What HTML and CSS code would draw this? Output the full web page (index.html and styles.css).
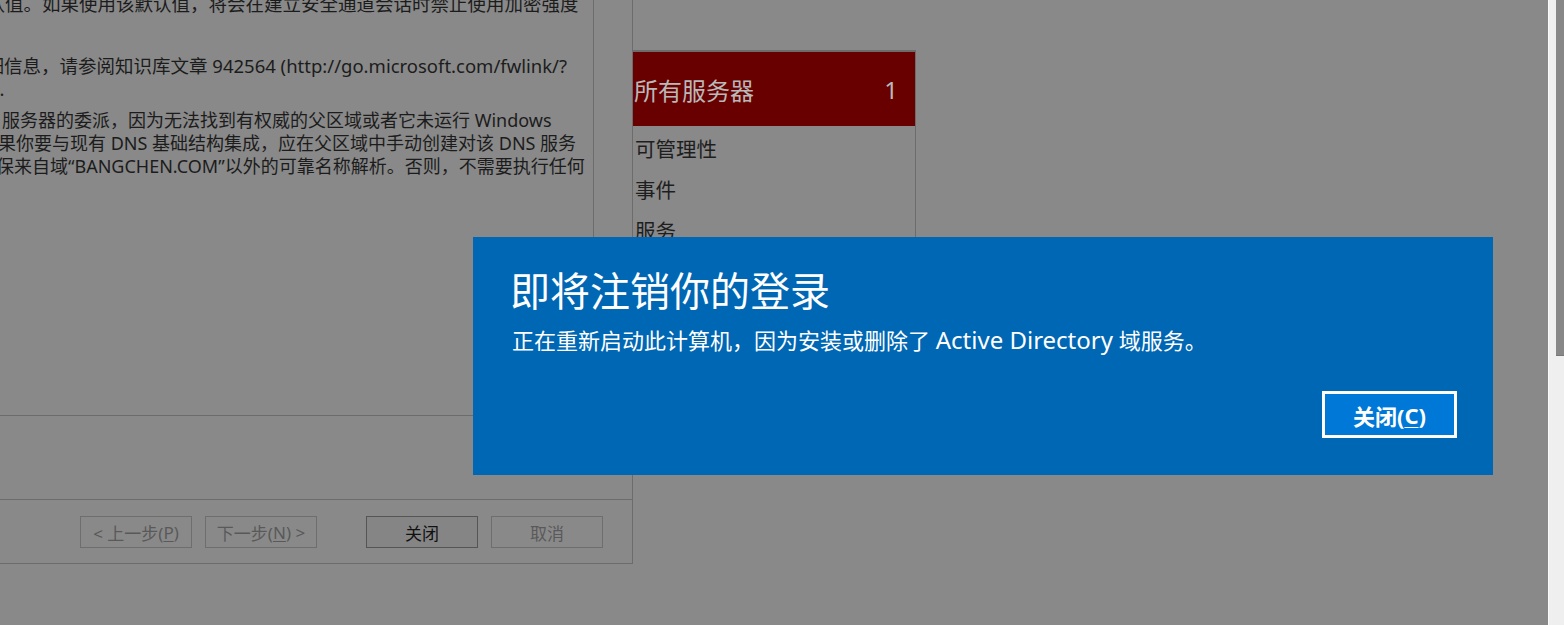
FILE: index.html
```html
<!DOCTYPE html>
<html lang="zh-CN">
<head>
<meta charset="utf-8">
<title>即将注销你的登录</title>
<link rel="stylesheet" href="styles.css">
</head>
<body>
<div class="desktop">
  <div class="wizard">
    <div class="wiz-body">
      <div class="text-pane">
        <p class="line l1">默认值。如果使用该默认值，将会在建立安全通道会话时禁止使用加密强度</p>
        <p class="line l2">详细信息，请参阅知识库文章 942564 (http://go.microsoft.com/fwlink/?</p>
        <p class="line l3">).</p>
        <p class="line l4">服务器的委派，因为无法找到有权威的父区域或者它未运行 Windows</p>
        <p class="line l5">如果你要与现有 DNS 基础结构集成，应在父区域中手动创建对该 DNS 服务</p>
        <p class="line l6">确保来自域“BANGCHEN.COM”以外的可靠名称解析。否则，不需要执行任何</p>
      </div>
      <div class="pane-gap"></div>
    </div>
    <div class="wiz-mid"></div>
    <div class="wiz-buttons">
      <div class="btn dim">&lt; 上一步(<u>P</u>)</div>
      <div class="btn dim">下一步(<u>N</u>) &gt;</div>
      <div class="btn default">关闭</div>
      <div class="btn dim">取消</div>
    </div>
  </div>
  <div class="manager">
    <div class="servers">
      <div class="servers-head"><span>所有服务器</span><span class="count">1</span></div>
      <div class="servers-item">可管理性</div>
      <div class="servers-item">事件</div>
      <div class="servers-item">服务</div>
    </div>
  </div>
  <div class="scrollbar"><div class="thumb"></div></div>
</div>
<div class="logoff">
  <h1 class="logoff-title">即将注销你的登录</h1>
  <p class="logoff-msg">正在重新启动此计算机，因为安装或删除了 <span class="lat">Active Directory</span> 域服务。</p>
  <div class="logoff-actions">
    <div class="logoff-btn">关闭(<u>C</u>)</div>
  </div>
</div>
</body>
</html>
```
FILE: styles.css
```css
html, body {
  margin: 0;
  padding: 0;
}
body {
  width: 1564px;
  height: 625px;
  overflow: hidden;
  position: relative;
  background: #898989;
  font-family: "Noto Sans", "Noto Sans CJK SC", sans-serif;
}
.desktop {
  display: flex;
  height: 625px;
}
.wizard {
  width: 632px;
  height: 563px;
  flex-shrink: 0;
  border-right: 1px solid #6c6c6c;
  border-bottom: 1px solid #6c6c6c;
  display: flex;
  flex-direction: column;
}
.wiz-body {
  height: 415px;
  border-bottom: 1px solid #6c6c6c;
  display: flex;
}
.text-pane {
  width: 593px;
  border-right: 1px solid #6c6c6c;
  overflow: hidden;
  color: #1c1c1c;
  font-size: 18.5px;
  line-height: 23px;
  white-space: nowrap;
}
.pane-gap {
  flex: 1;
}
.line {
  margin: 0;
}
.l1 { margin-top: -8px; text-indent: -32px; }
.l2 { margin-top: 39px; text-indent: -33px; }
.l3 { text-indent: -6px; }
.l4 { margin-top: 9px; text-indent: 2px; font-size: 18px; }
.l5 { text-indent: -20px; font-size: 18px; }
.l6 { text-indent: -22px; font-size: 18px; }
.wiz-mid {
  height: 83px;
  border-bottom: 1px solid #6c6c6c;
}
.wiz-buttons {
  flex: 1;
  display: flex;
  align-items: flex-start;
  justify-content: flex-end;
  padding: 16px 29px 0 0;
}
.btn {
  width: 110px;
  height: 30px;
  border: 1px solid #6e6e6e;
  display: flex;
  align-items: center;
  justify-content: center;
  font-size: 17px;
  color: #595959;
  margin-left: 13px;
}
.btn u {
  text-underline-offset: 2px;
}
.btn.default {
  margin-left: 49px;
  border-color: #555;
  background: #858585;
  color: #111;
}
.manager {
  flex: 1;
  padding-top: 50px;
}
.servers {
  width: 282px;
  height: 380px;
  border-top: 2px solid #6c6c6c;
  border-right: 1px solid #6c6c6c;
}
.servers-head {
  height: 74px;
  background: #690000;
  color: #b9b9b9;
  font-size: 24px;
  display: flex;
  align-items: center;
  justify-content: space-between;
  padding: 0 17px 0 1px;
}
.servers-item {
  height: 41px;
  line-height: 46px;
  font-size: 20.5px;
  color: #1e1e1e;
  padding-left: 2px;
}
.scrollbar {
  width: 15px;
  height: 625px;
  margin-left: auto;
  border-left: 1px solid #fafafa;
  background: #efefef;
  display: flex;
  justify-content: flex-end;
}
.thumb {
  width: 8px;
  height: 355px;
  background: #878787;
  border-bottom: 1px solid #777;
}
.logoff {
  position: absolute;
  left: 473px;
  top: 237px;
  width: 1020px;
  height: 238px;
  box-sizing: border-box;
  background: #0067b4;
  color: #fff;
  padding: 24px 36px 0 37px;
  display: flex;
  flex-direction: column;
}
.logoff-title {
  margin: 0;
  font-family: "Noto Sans CJK SC", sans-serif;
  font-size: 40px;
  font-weight: 400;
  line-height: 56px;
}
.logoff-msg {
  margin: 8px 0 0 2px;
  font-size: 22px;
  line-height: 30px;
}
.logoff-msg .lat {
  font-size: 24px;
}
.logoff-actions {
  display: flex;
  justify-content: flex-end;
  margin-top: 36px;
}
.logoff-btn {
  width: 129px;
  height: 41px;
  border: 3px solid #fff;
  background: #0078d7;
  display: flex;
  align-items: center;
  justify-content: center;
  font-size: 22px;
  font-weight: 700;
}
.logoff-btn u {
  text-underline-offset: 3px;
  text-decoration-thickness: 1px;
}
```
